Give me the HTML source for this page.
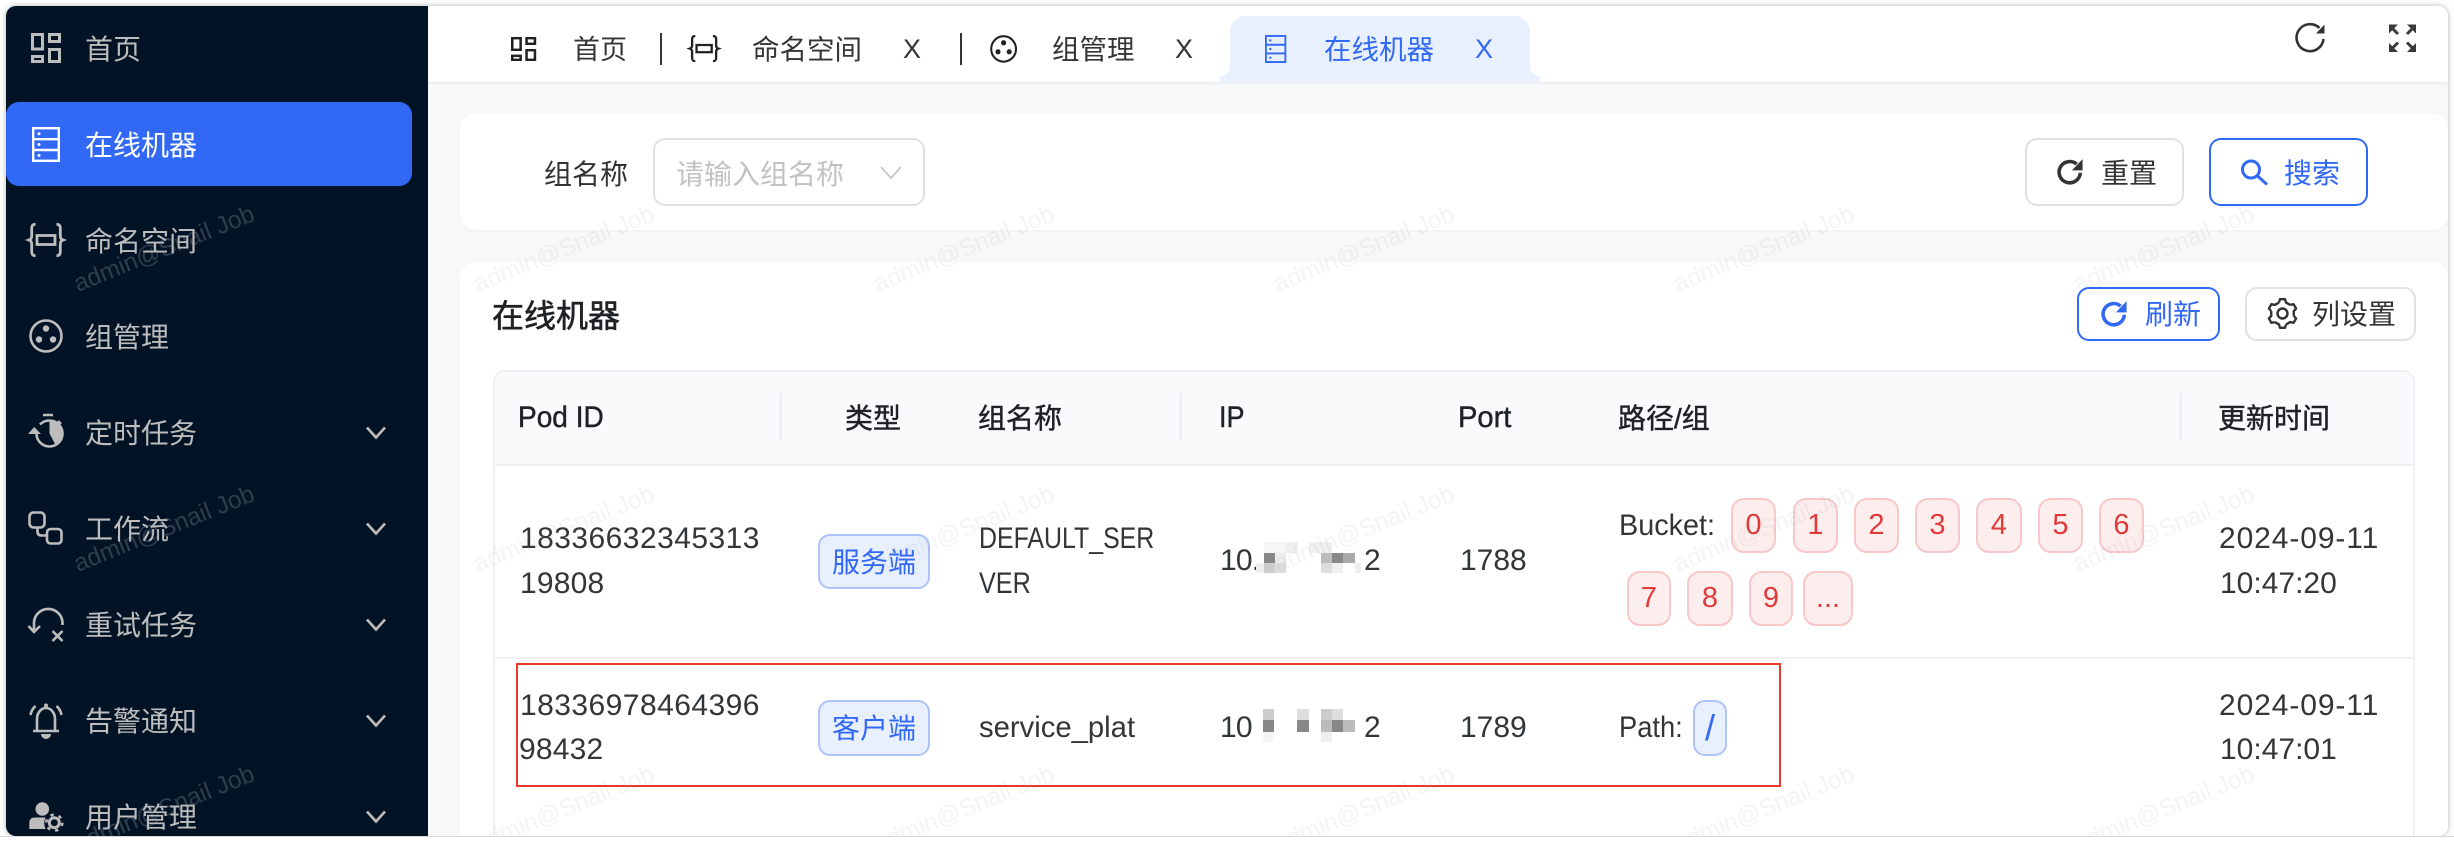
<!DOCTYPE html>
<html lang="zh"><head><meta charset="utf-8"><title>在线机器</title>
<style>
html,body{margin:0;padding:0;background:#fff;width:2454px;height:842px;overflow:hidden}
body{font-family:"Liberation Sans","Noto Sans CJK SC",sans-serif;font-size:28px;color:#333639;position:relative}
.win{position:absolute;left:6px;top:6px;width:2442px;height:830px;border-radius:10px;box-shadow:0 0 6px rgba(0,0,0,.3);background:#f7f8fa}
.abs{position:absolute}
.t{position:absolute;line-height:44px;white-space:nowrap}
.d{font-size:30px}
.x{font-size:30px;transform-origin:left center}
.side{position:absolute;left:6px;top:6px;width:422px;height:830px;background:#031326;border-radius:10px 0 0 10px}
.active{position:absolute;left:6px;top:102px;width:406px;height:84px;background:#3268f6;border-radius:13px}
.m{color:#bdbdbd;left:85px}
.head{position:absolute;left:428px;top:6px;width:2020px;height:76px;background:#fff;border-radius:0 10px 0 0;box-shadow:0 1px 2px rgba(0,0,0,.07)}
.tabact{position:absolute;left:1230px;top:16px;width:300px;height:66px;background:#e8effd;border-radius:16px 16px 0 0}
.card{position:absolute;background:#fff;border-radius:16px}
.sep{position:absolute;width:2px;top:33px;height:32px;background:#333}
.btn{position:absolute;box-sizing:border-box;border:2px solid #e0e0e6;border-radius:12px;background:#fff}
.blue{border-color:#3268f6}
.h{color:#1f2225;-webkit-text-stroke:.45px #1f2225}
.col{position:absolute;width:3px;background:#efeff5;top:393px;height:47px}
.tag{position:absolute;box-sizing:border-box;border:2px solid #adc3fa;background:#e8effd;color:#3268f6;border-radius:12px;display:flex;align-items:center;justify-content:center;line-height:1;padding-top:2px}
.r{border-color:#f8c8c8;background:#fdeeee;color:#e03a3a;border-radius:13px;top:498px;height:55px;font-size:29px;padding-top:0}
.r2{top:571px}
.b{top:700px;height:56px}
svg.o{position:absolute;left:0;top:0;pointer-events:none}
</style></head><body>
<div class="win"></div>
<div class="side"></div>
<div class="active"></div>
<div class="head"></div>
<div class="tabact"></div>
<div class="abs" style="left:1220px;top:66px;width:10px;height:16px;background:radial-gradient(circle at 0 0,transparent 10px,#e8effd 10.5px)"></div>
<div class="abs" style="left:1530px;top:66px;width:10px;height:16px;background:radial-gradient(circle at 100% 0,transparent 10px,#e8effd 10.5px)"></div>
<div class="card" style="left:460px;top:114px;width:1988px;height:116px;box-shadow:0 1px 2px rgba(0,0,0,.03)"></div>
<div class="card" style="left:460px;top:262px;width:1988px;height:574px;border-radius:16px 16px 10px 0"></div>

<!-- sidebar text -->
<div class="t m" style="top:28px">首页</div>
<div class="t" style="left:85px;top:124px;color:#fff">在线机器</div>
<div class="t m" style="top:220px">命名空间</div>
<div class="t m" style="top:316px">组管理</div>
<div class="t m" style="top:412px">定时任务</div>
<div class="t m" style="top:508px">工作流</div>
<div class="t m" style="top:604px">重试任务</div>
<div class="t m" style="top:700px">告警通知</div>
<div class="t m" style="top:796px">用户管理</div>

<!-- tabs -->
<div class="t" style="left:573px;top:28px;font-size:27px">首页</div>
<div class="sep" style="left:660px"></div>
<div class="t" style="left:752px;top:28px;font-size:27.5px">命名空间</div>
<div class="t" style="left:903px;top:27px;font-size:27px">X</div>
<div class="sep" style="left:960px"></div>
<div class="t" style="left:1052px;top:28px;font-size:27.5px">组管理</div>
<div class="t" style="left:1175px;top:27px;font-size:27px">X</div>
<div class="t" style="left:1324px;top:28px;font-size:27.5px;color:#3268f6">在线机器</div>
<div class="t" style="left:1475px;top:27px;font-size:27px;color:#3268f6">X</div>

<!-- search form -->
<div class="t" style="left:544px;top:153px;color:#333">组名称</div>
<div class="btn" style="left:653px;top:138px;width:272px;height:68px"></div>
<div class="t" style="left:676px;top:153px;color:#c2c2c2">请输入组名称</div>
<div class="btn" style="left:2025px;top:138px;width:159px;height:68px"></div>
<div class="t" style="left:2101px;top:152px;color:#333">重置</div>
<div class="btn blue" style="left:2209px;top:138px;width:159px;height:68px"></div>
<div class="t" style="left:2284px;top:152px;color:#3268f6">搜索</div>

<!-- table head bar -->
<div class="t h" style="left:492px;top:294px;font-size:32px;-webkit-text-stroke:.6px #1f2225">在线机器</div>
<div class="btn blue" style="left:2077px;top:287px;width:143px;height:54px"></div>
<div class="t" style="left:2145px;top:293px;color:#3268f6">刷新</div>
<div class="btn" style="left:2245px;top:287px;width:171px;height:54px"></div>
<div class="t" style="left:2312px;top:293px;color:#333">列设置</div>

<!-- table -->
<div class="abs" style="left:493px;top:370px;width:1922px;height:466px;box-sizing:border-box;border:2px solid #efeff5;border-bottom:0;border-radius:12px 12px 0 0;background:#fff"></div>
<div class="abs" style="left:495px;top:372px;width:1918px;height:92px;background:#fafafc;border-radius:10px 10px 0 0"></div>
<div class="abs" style="left:495px;top:464px;width:1918px;height:2px;background:#efeff5"></div>
<div class="abs" style="left:495px;top:657px;width:1918px;height:2px;background:#efeff5"></div>
<div class="col" style="left:779px"></div>
<div class="col" style="left:1179px"></div>
<div class="col" style="left:2179px"></div>

<div class="t h x" style="left:518px;top:396px;transform:scaleX(.935)">Pod ID</div>
<div class="t h" style="left:845px;top:397px">类型</div>
<div class="t h" style="left:978px;top:397px">组名称</div>
<div class="t h x" style="left:1219px;top:396px;transform:scaleX(.9)">IP</div>
<div class="t h x" style="left:1458px;top:396px;transform:scaleX(.97)">Port</div>
<div class="t h" style="left:1618px;top:397px">路径/组</div>
<div class="t h" style="left:2218px;top:397px">更新时间</div>

<div class="t d" style="left:520px;top:517px;letter-spacing:.45px">18336632345313</div>
<div class="t d" style="left:520px;top:562px;letter-spacing:.2px">19808</div>
<div class="tag" style="left:818px;top:534px;width:112px;height:55px">服务端</div>
<div class="t x" style="left:979px;top:517px;transform:scaleX(.83)">DEFAULT_SER</div>
<div class="t x" style="left:979px;top:562px;transform:scaleX(.84)">VER</div>
<div class="t d" style="left:1220px;top:539px;letter-spacing:-.8px">10.</div>
<div class="t d" style="left:1364px;top:539px">2</div>
<div class="t d" style="left:1460px;top:539px">1788</div>
<div class="t x" style="left:1619px;top:504px;transform:scaleX(.96)">Bucket:</div>
<div class="tag r" style="left:1731px;width:45px">0</div>
<div class="tag r" style="left:1793px;width:45px">1</div>
<div class="tag r" style="left:1854px;width:45px">2</div>
<div class="tag r" style="left:1915px;width:45px">3</div>
<div class="tag r" style="left:1976px;width:46px">4</div>
<div class="tag r" style="left:2038px;width:45px">5</div>
<div class="tag r" style="left:2099px;width:45px">6</div>
<div class="tag r r2" style="left:1627px;width:44px">7</div>
<div class="tag r r2" style="left:1687px;width:46px">8</div>
<div class="tag r r2" style="left:1749px;width:44px">9</div>
<div class="tag r r2" style="left:1803px;width:50px">...</div>
<div class="t d" style="left:2219px;top:517px;letter-spacing:.9px">2024-09-11</div>
<div class="t d" style="left:2220px;top:562px">10:47:20</div>

<div class="t d" style="left:520px;top:684px;letter-spacing:.45px">18336978464396</div>
<div class="t d" style="left:519px;top:728px;letter-spacing:.2px">98432</div>
<div class="tag b" style="left:818px;width:112px">客户端</div>
<div class="t x" style="left:979px;top:706px;transform:scaleX(.975)">service_plat</div>
<div class="t d" style="left:1220px;top:706px;letter-spacing:-.8px">10</div>
<div class="t d" style="left:1364px;top:706px">2</div>
<div class="t d" style="left:1460px;top:706px">1789</div>
<div class="t x" style="left:1619px;top:706px;transform:scaleX(.91)">Path:</div>
<div class="tag b" style="left:1693px;width:34px;font-size:36px;padding:0">/</div>
<div class="t d" style="left:2219px;top:684px;letter-spacing:.9px">2024-09-11</div>
<div class="t d" style="left:2220px;top:728px">10:47:01</div>

<!-- red annotation -->
<div class="abs" style="left:516px;top:663px;width:1265px;height:124px;box-sizing:border-box;border:2px solid #e8392b"></div>

<svg class="o" width="2454" height="842" viewBox="0 0 2454 842" xmlns="http://www.w3.org/2000/svg" fill="none">
<defs>
<clipPath id="topclip"><rect x="0" y="0" width="2454" height="7"/></clipPath>
<g id="i-home" stroke="currentColor" stroke-width="3"><rect x="1.5" y="1.5" width="10" height="14.5"/><rect x="1.5" y="23.5" width="10" height="5"/><rect x="18.5" y="1.5" width="10" height="7"/><rect x="18.5" y="16.5" width="10" height="12"/></g>
<g id="i-server" stroke="currentColor" stroke-width="2.4"><rect x="1.2" y="1.2" width="25.6" height="32.6"/><path d="M1 12.2H27M1 23H27"/><circle cx="7" cy="6.8" r="1.5" fill="currentColor" stroke="none"/><circle cx="7" cy="17.5" r="1.5" fill="currentColor" stroke="none"/><circle cx="7" cy="28.4" r="1.5" fill="currentColor" stroke="none"/></g>
<g id="i-ns" stroke="currentColor" stroke-width="2.8"><rect x="9" y="12.5" width="18" height="9"/><path d="M7.5 1.3C4.5 1.3 3.7 2.8 3.7 5.5V13C3.7 15 2.7 16.4 1 17C2.7 17.6 3.7 19 3.7 21V28.5C3.7 31.2 4.5 32.7 7.5 32.7M28.5 1.3C31.5 1.3 32.3 2.8 32.3 5.5V13C32.3 15 33.3 16.4 35 17C33.3 17.6 32.3 19 32.3 21V28.5C32.3 31.2 31.5 32.7 28.5 32.7"/></g>
<g id="i-group"><circle cx="17" cy="17" r="15.5" stroke="currentColor" stroke-width="2.6"/><circle cx="17" cy="9.5" r="3.2" fill="currentColor"/><circle cx="10" cy="20.5" r="3.2" fill="currentColor"/><circle cx="24" cy="20.5" r="3.2" fill="currentColor"/></g>
<g id="i-refresh"><path d="M20.6 12.5A9 9 0 1 1 17.5 5.2" stroke="currentColor" stroke-width="3"/><path d="M22.5 1V10.5H13.5Z" fill="currentColor"/></g>
</defs>
<!-- sidebar icons -->
<g color="#bdbdbd">
<use href="#i-home" x="31" y="33"/>
<use href="#i-ns" x="28" y="223"/>
<use href="#i-group" x="29" y="319"/>
<g stroke="#bdbdbd" stroke-width="2.6">
<path d="M43 415H53M58 421L61 424"/>
<path d="M36.5 434A13 13 0 1 0 49.5 420.5M40 424.5A13 13 0 0 1 49.5 420.5"/>
<rect x="29.5" y="512.5" width="15" height="15" rx="4"/><rect x="47" y="529" width="14.5" height="14.5" rx="3.5"/>
<path d="M37.5 527V531.5Q37.5 535.5 41.5 535.5H47"/>
<path d="M62.5 625V622A14.3 14.3 0 0 0 34 622V631M28.5 626L34 632L40 626"/>
<path d="M52.5 631L62.5 641M62.5 631L52.5 641"/>
<path d="M37 730V719C37 713 41 708 46 708C51 708 55 713 55 719V730M33 731H59M30.5 715Q31.5 709.5 35.5 706M61.5 715Q60.5 709.5 56.5 706"/>
<circle cx="54.3" cy="822.7" r="5" stroke-width="3"/>
<circle cx="54.3" cy="822.7" r="8" stroke-width="2.6" stroke-dasharray="3.2 5.2"/>
</g>
<path d="M49.5 433.5V420.5A13 13 0 0 1 55.5 445Z" fill="#bdbdbd"/>
<path d="M28 434L34.3 427L41 434Z" fill="#bdbdbd"/>
<path d="M41 734H51A5 5 0 0 1 41 734Z" fill="#bdbdbd"/>
<circle cx="46" cy="705.5" r="2" fill="#bdbdbd"/>
<circle cx="42.3" cy="809" r="6.8" fill="#bdbdbd"/>
<path d="M29.3 829V823Q29.3 817.5 35 817.5H45.5Q43 823 45.5 829Z" fill="#bdbdbd"/>
<g stroke="#bdbdbd" stroke-width="2.6" fill="none">
<path d="M367 427.5L376 437.5L385 427.5M367 523.5L376 533.5L385 523.5M367 619.5L376 629.5L385 619.5M367 715.5L376 725.5L385 715.5M367 811.5L376 821.5L385 811.5"/>
</g>
</g>
<use href="#i-server" x="32" y="127" color="#fff"/>
<!-- tab icons -->
<g color="#222">
<use href="#i-home" transform="translate(511 37) scale(.84 .8)"/>
<use href="#i-ns" transform="translate(689 35) scale(.84 .8)"/>
<use href="#i-group" transform="translate(990 35) scale(.8 .82)"/>
</g>
<use href="#i-server" transform="translate(1265 35) scale(.76 .8)" color="#3268f6"/>
<!-- top right -->
<path d="M2323.5 39A13.5 13.5 0 1 1 2319.5 28" stroke="#333" stroke-width="2.6"/>
<path d="M2324.5 24.5V33.5H2316Z" fill="#333"/>
<g fill="#3a3a3a">
<path d="M2389 24.5H2398L2389 33.5ZM2416 24.5H2407L2416 33.5ZM2389 52H2398L2389 43ZM2416 52H2407L2416 43Z"/>
</g>
<path d="M2392 28L2398 34M2413 28L2407 34M2392 48.500L2398 42.500M2413 48.500L2407 42.500" stroke="#3a3a3a" stroke-width="3"/>
<!-- form icons -->
<path d="M881 167L891 178L901 167" stroke="#c8c8c8" stroke-width="1.8"/>
<use href="#i-refresh" transform="translate(2056 158) scale(1.18)" color="#333"/>
<circle cx="2251" cy="169.500" r="8.500" stroke="#3268f6" stroke-width="3"/>
<path d="M2257.500 176L2267 184.500" stroke="#3268f6" stroke-width="3"/>
<use href="#i-refresh" transform="translate(2100 300) scale(1.18)" color="#3268f6"/>
<g transform="translate(2282.500 313.500)" stroke="#333" stroke-width="2.4" stroke-linejoin="round">
<circle r="5"/>
<path id="cg" d="M-3.550 -10.940L-2.520 -14.280H2.520L3.550 -10.940L7.690 -8.550"/>
<use href="#cg" transform="rotate(60)"/><use href="#cg" transform="rotate(120)"/><use href="#cg" transform="rotate(180)"/><use href="#cg" transform="rotate(240)"/><use href="#cg" transform="rotate(300)"/>
</g>
<!-- mosaic -->
<g>
<rect x="1264" y="542" width="22" height="11" fill="#f6f6f6"/><rect x="1286" y="542" width="12" height="11" fill="#efefef"/><rect x="1309" y="542" width="23" height="11" fill="#f0f0f0"/>
<rect x="1264" y="553" width="11" height="10" fill="#888"/><rect x="1275" y="553" width="11" height="10" fill="#eee"/><rect x="1321" y="553" width="11" height="10" fill="#bbb"/><rect x="1332" y="553" width="11" height="10" fill="#888"/><rect x="1343" y="553" width="12" height="10" fill="#aaa"/>
<rect x="1256" y="563" width="8" height="10" fill="#eee"/><rect x="1264" y="563" width="11" height="10" fill="#ccc"/><rect x="1275" y="563" width="11" height="10" fill="#ddd"/><rect x="1321" y="563" width="11" height="10" fill="#ddd"/><rect x="1332" y="563" width="11" height="10" fill="#f0f0f0"/><rect x="1355" y="563" width="6" height="10" fill="#eee"/>
<rect x="1263" y="709" width="11" height="11" fill="#ccc"/><rect x="1297" y="709" width="12" height="11" fill="#ddd"/><rect x="1321" y="709" width="11" height="11" fill="#ccc"/><rect x="1332" y="709" width="11" height="11" fill="#ddd"/>
<rect x="1263" y="720" width="11" height="12" fill="#888"/><rect x="1297" y="720" width="12" height="12" fill="#888"/><rect x="1321" y="720" width="11" height="12" fill="#bbb"/><rect x="1332" y="720" width="11" height="12" fill="#888"/><rect x="1343" y="720" width="12" height="12" fill="#bbb"/>
<rect x="1263" y="732" width="11" height="10" fill="#f5f5f5"/><rect x="1321" y="732" width="11" height="10" fill="#eee"/>
</g>
<!-- watermark -->
<g font-family="Liberation Sans, sans-serif" font-size="24.500" text-anchor="middle" fill="rgb(170,175,180)" fill-opacity=".27">
<text transform="translate(167 256) rotate(-22)">admin@Snail Job</text>
<text transform="translate(167 536) rotate(-22)">admin@Snail Job</text>
<text transform="translate(167 816) rotate(-22)">admin@Snail Job</text>
</g>
<g font-family="Liberation Sans, sans-serif" font-size="24.500" text-anchor="middle" fill="rgb(128,128,128)" fill-opacity=".09">
<text transform="translate(567 256) rotate(-22)">admin@Snail Job</text>
<text transform="translate(967 256) rotate(-22)">admin@Snail Job</text>
<text transform="translate(1367 256) rotate(-22)">admin@Snail Job</text>
<text transform="translate(1767 256) rotate(-22)">admin@Snail Job</text>
<text transform="translate(2167 256) rotate(-22)">admin@Snail Job</text>
<text transform="translate(567 536) rotate(-22)">admin@Snail Job</text>
<text transform="translate(967 536) rotate(-22)">admin@Snail Job</text>
<text transform="translate(1367 536) rotate(-22)">admin@Snail Job</text>
<text transform="translate(1767 536) rotate(-22)">admin@Snail Job</text>
<text transform="translate(2167 536) rotate(-22)">admin@Snail Job</text>
<text transform="translate(567 816) rotate(-22)">admin@Snail Job</text>
<text transform="translate(967 816) rotate(-22)">admin@Snail Job</text>
<text transform="translate(1367 816) rotate(-22)">admin@Snail Job</text>
<text transform="translate(1767 816) rotate(-22)">admin@Snail Job</text>
<text transform="translate(2167 816) rotate(-22)">admin@Snail Job</text>
</g>
</svg>
<div class="abs" style="left:0;top:836px;width:2454px;height:6px;background:#fff"></div>
<div class="abs" style="left:0;top:836px;width:2454px;height:1px;background:#d9d9d9"></div>
</body></html>
